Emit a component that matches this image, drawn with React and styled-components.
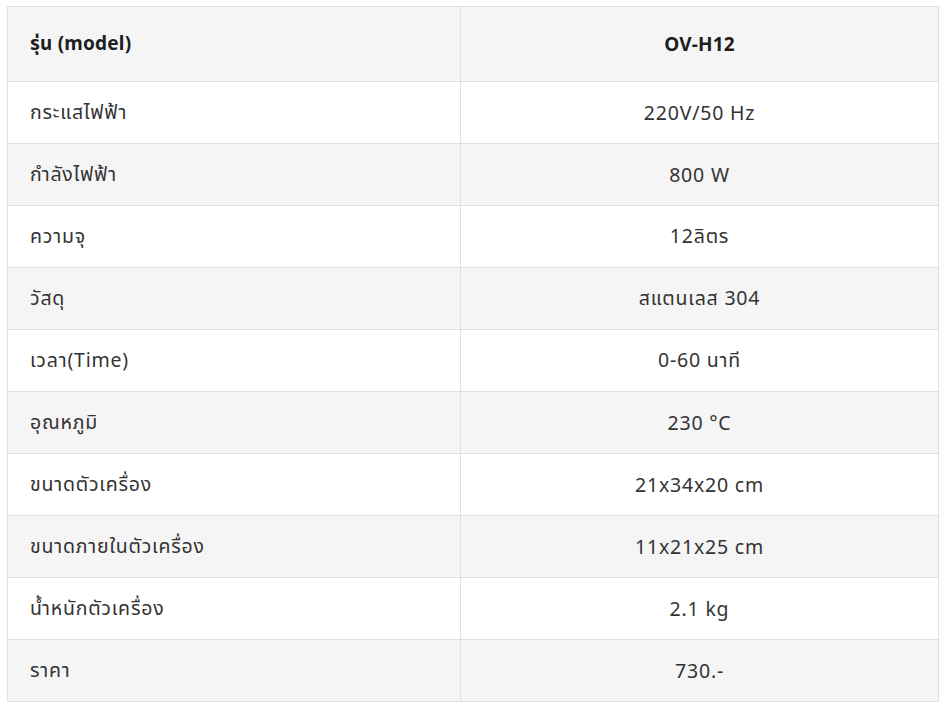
import React from "react";
import styled, { createGlobalStyle } from "styled-components";

const Global = createGlobalStyle`
  html, body { margin: 0; padding: 0; background: #fff; }
  body { font-family: "Noto Sans", "Noto Sans Thai", "Open Sans", sans-serif; color: #333; }
`;

const Wrap = styled.div`
  padding: 6px 0 0 7px;
`;

const Table = styled.table`
  width: 932px;
  border-collapse: collapse;
  table-layout: fixed;
  border: 1px solid #dedede;
`;

const Col = styled.col`
  width: ${(p) => p.$w || "auto"};
`;

const Row = styled.tr`
  background: ${(p) => (p.$shade ? "#f5f5f5" : "#ffffff")};
  height: ${(p) => (p.$head ? "75px" : "62px")};
`;

const Cell = styled.td`
  box-sizing: border-box;
  border: 1px solid #e0e0e0;
  padding: 0 22px;
  font-size: ${(p) => (p.$bold ? "19px" : "19.5px")};
  letter-spacing: ${(p) => (p.$bold ? "0.2px" : "0.8px")};
  font-weight: ${(p) => (p.$bold ? 700 : 400)};
  color: ${(p) => (p.$bold ? "#1e1e1e" : "#333")};
  text-align: ${(p) => (p.$center ? "center" : "left")};
  vertical-align: middle;
  white-space: nowrap;
`;

const rows = [
  ["กระแสไฟฟ้า", "220V/50 Hz"],
  ["กำลังไฟฟ้า", "800 W"],
  ["ความจุ", "12ลิตร"],
  ["วัสดุ", "สแตนเลส 304"],
  ["เวลา(Time)", "0-60 นาที"],
  ["อุณหภูมิ", "230 °C"],
  ["ขนาดตัวเครื่อง", "21x34x20 cm"],
  ["ขนาดภายในตัวเครื่อง", "11x21x25 cm"],
  ["น้ำหนักตัวเครื่อง", "2.1 kg"],
  ["ราคา", "730.-"],
];

export default function App() {
  return (
    <Wrap>
      <Global />
      <Table>
        <colgroup>
          <Col $w="453px" />
          <Col />
        </colgroup>
        <tbody>
          <Row $head $shade>
            <Cell $bold>รุ่น (model)</Cell>
            <Cell $bold $center>OV-H12</Cell>
          </Row>
          {rows.map(([k, v], i) => (
            <Row key={k} $shade={i % 2 === 1}>
              <Cell>{k}</Cell>
              <Cell $center>{v}</Cell>
            </Row>
          ))}
        </tbody>
      </Table>
    </Wrap>
  );
}
